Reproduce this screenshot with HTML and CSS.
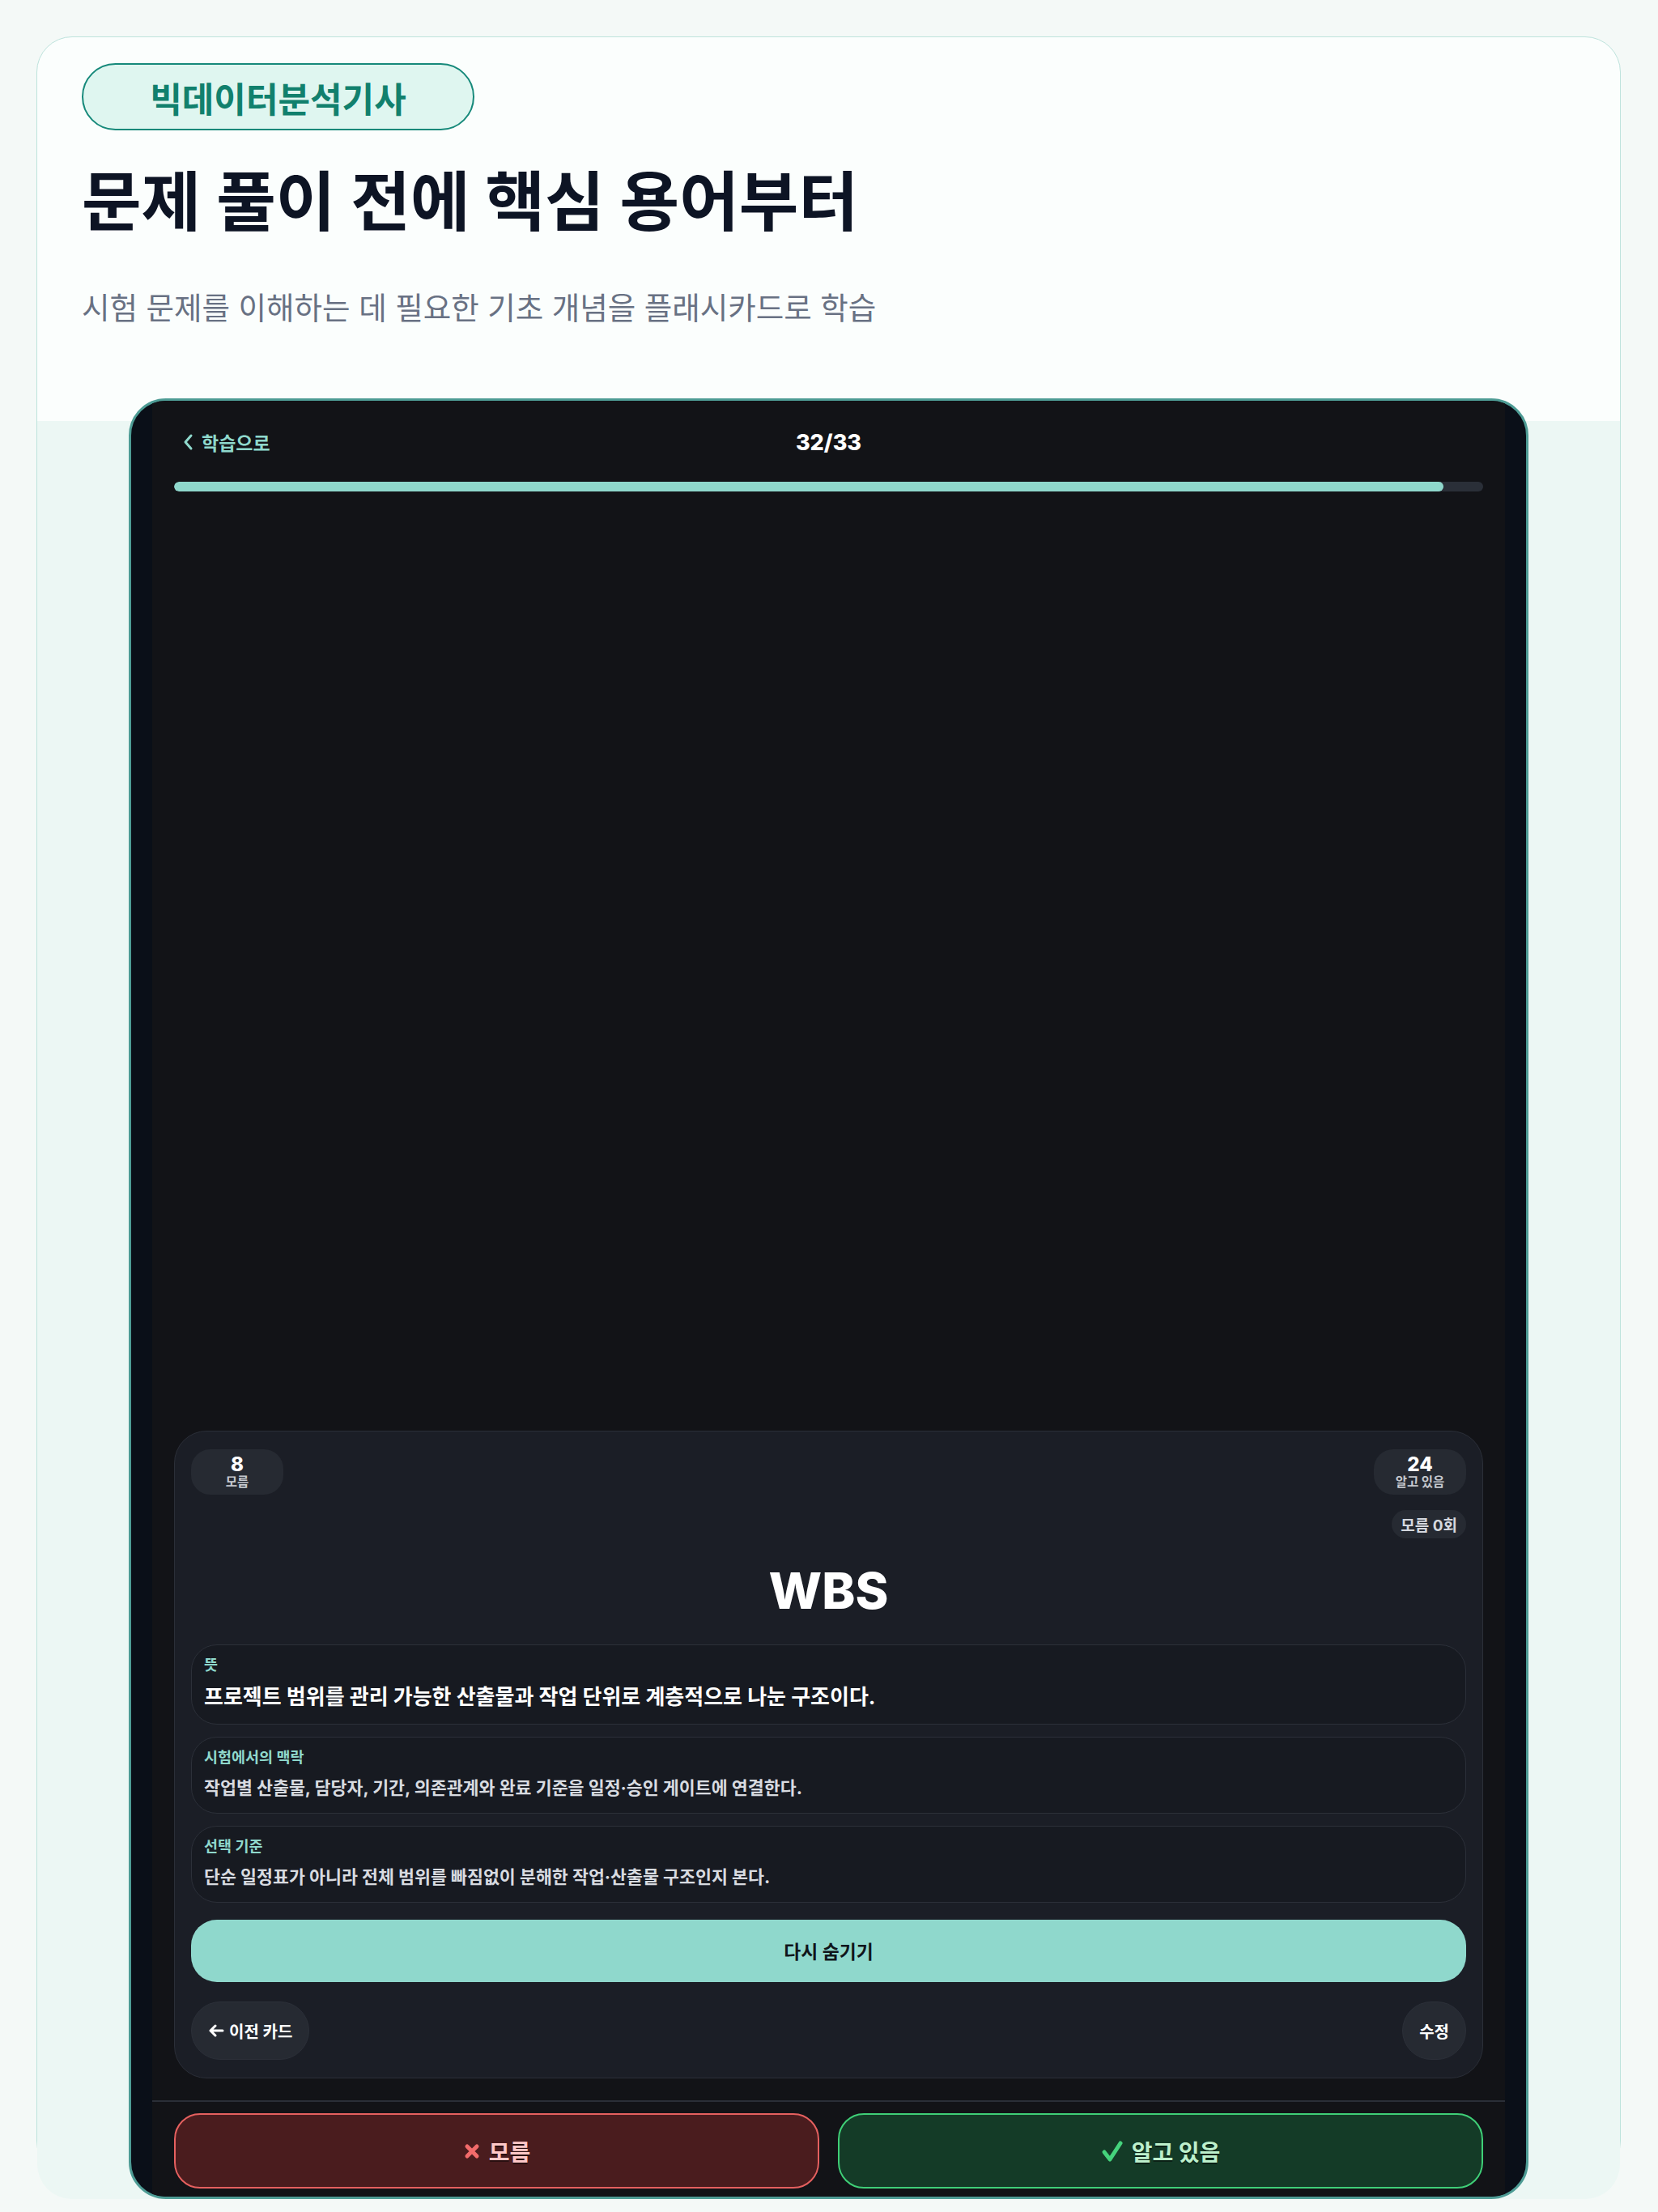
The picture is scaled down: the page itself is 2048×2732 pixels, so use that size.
FILE: index.html
```html
<!DOCTYPE html>
<html lang="ko">
<head>
<meta charset="utf-8">
<title>빅데이터분석기사 플래시카드</title>
<link rel="stylesheet" href="styles.css">
</head>
<body>
<div class="page-card">
  <section class="hero">
    <div class="badge">빅데이터분석기사</div>
    <h1 class="title">문제 풀이 전에 핵심 용어부터</h1>
    <p class="subtitle">시험 문제를 이해하는 데 필요한 기초 개념을 플래시카드로 학습</p>
  </section>
  <section class="preview">
    <div class="device">
      <div class="screen">
        <div class="topbar">
          <a class="back">
            <svg class="chev" width="14" height="22" viewBox="0 0 14 22"><path d="M11 3 L4 11 L11 19" fill="none" stroke="#8fd8cc" stroke-width="3" stroke-linecap="round" stroke-linejoin="round"/></svg>
            <span>학습으로</span>
          </a>
          <div class="counter">32/33</div>
          <div></div>
        </div>
        <div class="progress"><div class="progress-fill" style="width: 96.97%"></div></div>
        <div class="spacer"></div>
        <div class="card">
          <div class="stats">
            <div class="stat"><span class="stat-num">8</span><span class="stat-label">모름</span></div>
            <div class="stat"><span class="stat-num">24</span><span class="stat-label">알고 있음</span></div>
          </div>
          <div class="miss-row"><span class="miss">모름 0회</span></div>
          <div class="term">WBS</div>
          <div class="sec sec-main">
            <div class="sec-label">뜻</div>
            <div class="sec-body">프로젝트 범위를 관리 가능한 산출물과 작업 단위로 계층적으로 나눈 구조이다.</div>
          </div>
          <div class="sec">
            <div class="sec-label">시험에서의 맥락</div>
            <div class="sec-body">작업별 산출물, 담당자, 기간, 의존관계와 완료 기준을 일정·승인 게이트에 연결한다.</div>
          </div>
          <div class="sec">
            <div class="sec-label">선택 기준</div>
            <div class="sec-body">단순 일정표가 아니라 전체 범위를 빠짐없이 분해한 작업·산출물 구조인지 본다.</div>
          </div>
          <button class="hide-btn">다시 숨기기</button>
          <div class="card-foot">
            <button class="pill-btn">
              <svg width="20" height="16" viewBox="0 0 20 16"><path d="M18 8 H3 M9 2 L3 8 L9 14" fill="none" stroke="#ffffff" stroke-width="3" stroke-linecap="round" stroke-linejoin="round"/></svg>
              <span>이전 카드</span>
            </button>
            <button class="pill-btn">수정</button>
          </div>
        </div>
        <div class="divider"></div>
        <div class="answer-row">
          <button class="answer answer-no">
            <svg width="22" height="22" viewBox="0 0 22 22"><path d="M5 5 L17 17 M17 5 L5 17" fill="none" stroke="#f26b6b" stroke-width="5" stroke-linecap="round"/></svg>
            <span>모름</span>
          </button>
          <button class="answer answer-yes">
            <svg width="28" height="28" viewBox="0 0 28 28"><path d="M4 15 L11 24 L24 4" fill="none" stroke="#45d37c" stroke-width="5" stroke-linecap="round" stroke-linejoin="round"/></svg>
            <span>알고 있음</span>
          </button>
        </div>
      </div>
    </div>
  </section>
</div>
</body>
</html>
```
FILE: styles.css
```css
* { box-sizing: border-box; margin: 0; padding: 0; }
html, body { background: #f4f9f7; }
body {
  width: 2048px;
  height: 2732px;
  padding: 45px 46px 0 45px;
  font-family: Inter, "Noto Sans CJK KR", "Noto Sans", sans-serif;
  overflow: hidden;
}
.page-card {
  height: 2643px;
  border: 1.5px solid #bde3dc;
  border-radius: 44px;
  background: #fbfefd;
  display: flex;
  flex-direction: column;
}
.hero { height: 474px; padding: 32px 0 0 55px; flex: none; }
.badge {
  display: flex;
  align-items: center;
  justify-content: center;
  width: 485px;
  height: 83px;
  border: 2.5px solid #16897a;
  border-radius: 42px;
  background: #dff6f0;
  color: #11806d;
  font-size: 43px;
  font-weight: 700;
}
.title {
  margin-top: 40px;
  font-size: 80px;
  line-height: 96px;
  font-weight: 700;
  color: #0d1424;
}
.subtitle {
  margin-top: 59px;
  font-size: 37.5px;
  line-height: 50px;
  color: #687183;
}
.preview {
  flex: 1;
  background: #ecf7f4;
  border-radius: 0 0 43px 43px;
}
.device {
  width: 1729px;
  height: 2224px;
  margin: -28px auto 0;
  border: 3px solid #4e9c95;
  border-radius: 46px;
  background: #0a0f18;
  padding: 0 26px;
  overflow: hidden;
}
.screen {
  height: 100%;
  background: #121317;
  display: flex;
  flex-direction: column;
  padding: 0 27px 10px;
}
.topbar {
  margin-top: 31px;
  height: 40px;
  display: grid;
  grid-template-columns: 1fr auto 1fr;
  align-items: center;
}
.back {
  display: flex;
  align-items: center;
  gap: 10px;
  padding-left: 10px;
  color: #8fd8cc;
  font-size: 23px;
  font-weight: 700;
}
.counter {
  color: #ffffff;
  font-size: 27px;
  font-weight: 800;
}
.progress {
  margin-top: 29px;
  height: 12px;
  border-radius: 6px;
  background: #2a2f38;
  overflow: hidden;
}
.progress-fill { height: 100%; background: #8fd8cc; border-radius: 6px; }
.spacer { flex: 1; }
.card {
  border: 1px solid #2b2f38;
  border-radius: 40px;
  background: #1b1e26;
  padding: 22px 20px 22px;
  display: flex;
  flex-direction: column;
}
.stats { display: flex; justify-content: space-between; }
.stat {
  width: 114px;
  height: 56px;
  border-radius: 24px;
  background: #262a32;
  display: flex;
  flex-direction: column;
  align-items: center;
  justify-content: center;
}
.stat-num { color: #ffffff; font-size: 24px; line-height: 26px; font-weight: 800; }
.stat-label { color: #c6c9cf; font-size: 15.5px; line-height: 18px; font-weight: 700; }
.miss-row { display: flex; justify-content: flex-end; margin-top: 19px; }
.miss {
  height: 35px;
  padding: 0 11px;
  border-radius: 18px;
  background: #262a32;
  color: #d5d8de;
  font-size: 19px;
  font-weight: 700;
  display: flex;
  align-items: center;
}
.term {
  margin-top: 27px;
  text-align: center;
  color: #ffffff;
  font-size: 62px;
  line-height: 76px;
  font-weight: 800;
}
.sec {
  border: 1px solid #2c3039;
  border-radius: 32px;
  background: #171a21;
  padding: 12px 15px 16px;
  margin-top: 15px;
}
.sec-main { margin-top: 28px; }
.sec-label { color: #8fd8cc; font-size: 18.5px; line-height: 24px; font-weight: 700; }
.sec-body {
  margin-top: 11px;
  color: #d8dbe0;
  font-size: 21.7px;
  line-height: 30px;
  font-weight: 700;
}
.sec-main .sec-body { color: #ffffff; font-size: 26px; line-height: 34px; }
.hide-btn {
  margin-top: 21px;
  height: 77px;
  border: none;
  border-radius: 32px;
  background: #8fd8cc;
  color: #10151a;
  font-family: inherit;
  font-size: 22.8px;
  font-weight: 700;
}
.card-foot {
  margin-top: 24px;
  display: flex;
  justify-content: space-between;
}
.pill-btn {
  height: 72px;
  padding: 0 20px;
  border: 1px solid #2c3039;
  border-radius: 36px;
  background: #262a32;
  color: #ffffff;
  font-family: inherit;
  font-size: 20px;
  font-weight: 700;
  display: flex;
  align-items: center;
  gap: 6px;
}
.divider {
  margin: 27px -27px 0;
  height: 2px;
  background: #2a2e37;
}
.answer-row {
  margin-top: 14px;
  height: 93px;
  display: grid;
  grid-template-columns: 1fr 1fr;
  gap: 23px;
}
.answer {
  border-radius: 32px;
  border: 2px solid;
  font-family: inherit;
  font-size: 28px;
  font-weight: 700;
  display: flex;
  align-items: center;
  justify-content: center;
  gap: 10px;
  text-shadow: 0 2px 0 rgba(0, 0, 0, 0.45);
}
.answer-no { background: #4a1c1e; border-color: #e5605f; color: #ffc8c8; }
.answer-yes { background: #143b27; border-color: #3fcf77; color: #bdf0cc; }
```
